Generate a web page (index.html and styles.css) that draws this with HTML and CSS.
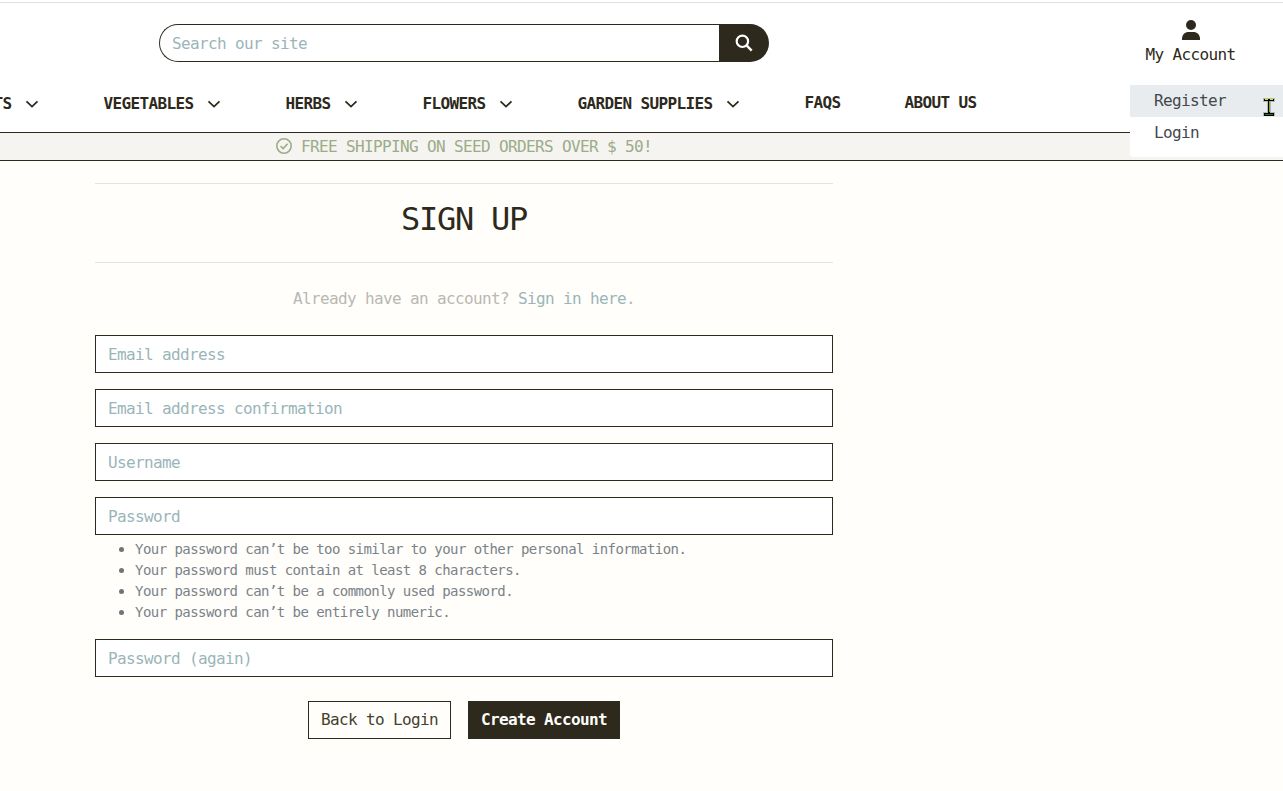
FILE: index.html
```html
<!DOCTYPE html>
<html lang="en">
<head>
<meta charset="utf-8">
<title>Sign Up</title>
<link rel="stylesheet" href="styles.css">
</head>
<body>
<header class="header">
  <div class="topbar">
    <form class="search">
      <input class="search-input" type="text" placeholder="Search our site">
      <button class="search-button" type="button" aria-label="Search">
        <svg width="18" height="18" viewBox="0 0 18 18" fill="none" stroke="#fff"><circle cx="7.4" cy="7.3" r="5.7" stroke-width="2.2"/><path d="M11.3 11.2l5.4 5.4" stroke-width="2.4"/></svg>
      </button>
    </form>
    <div class="account">
      <svg class="account-icon" width="18" height="20" viewBox="0 0 18 20" fill="#2d291c"><circle cx="9" cy="5" r="5"/><path d="M0 20v-1.2C0 14.700 3.100 12 6.500 12h5c3.400 0 6.500 2.700 6.500 6.800V20z"/></svg>
      <span>My Account</span>
      <div class="menu">
        <a class="menu-item active">Register</a>
        <a class="menu-item">Login</a>
      </div>
    </div>
  </div>
  <nav class="nav">
    <a class="nav-item">TS<svg class="chevron" viewBox="0 0 14 8"><path d="M1.500 1.300L7 6.600l5.500-5.300"/></svg></a>
    <a class="nav-item">VEGETABLES<svg class="chevron" viewBox="0 0 14 8"><path d="M1.500 1.300L7 6.600l5.500-5.300"/></svg></a>
    <a class="nav-item">HERBS<svg class="chevron" viewBox="0 0 14 8"><path d="M1.500 1.300L7 6.600l5.500-5.300"/></svg></a>
    <a class="nav-item">FLOWERS<svg class="chevron" viewBox="0 0 14 8"><path d="M1.500 1.300L7 6.600l5.500-5.300"/></svg></a>
    <a class="nav-item">GARDEN SUPPLIES<svg class="chevron" viewBox="0 0 14 8"><path d="M1.500 1.300L7 6.600l5.500-5.300"/></svg></a>
    <a class="nav-item plain">FAQS</a>
    <a class="nav-item plain">ABOUT US</a>
  </nav>
</header>
<div class="banner">
  <svg width="16" height="16" viewBox="0 0 16 16" fill="none" stroke="#9cab88" stroke-width="1.600"><circle cx="8" cy="8" r="7.200"/><path d="M4.600 8.200l2.500 2.300 4.500-4.800"/></svg>
  <span class="banner-text">FREE SHIPPING ON SEED ORDERS OVER $ 50!</span>
</div>
<main class="signup">
  <h1 class="title">SIGN UP</h1>
  <p class="hint">Already have an account? <a class="hint-link">Sign in here</a>.</p>
  <form class="form">
    <input class="field" type="text" placeholder="Email address">
    <input class="field" type="text" placeholder="Email address confirmation">
    <input class="field" type="text" placeholder="Username">
    <div>
      <input class="field" type="password" placeholder="Password">
      <ul class="rules">
        <li>Your password can’t be too similar to your other personal information.</li>
        <li>Your password must contain at least 8 characters.</li>
        <li>Your password can’t be a commonly used password.</li>
        <li>Your password can’t be entirely numeric.</li>
      </ul>
    </div>
    <input class="field" type="password" placeholder="Password (again)">
    <div class="actions">
      <a class="button">Back to Login</a>
      <button class="button primary" type="button">Create Account</button>
    </div>
  </form>
</main>
<svg class="pointer" width="12" height="18" viewBox="0 0 12 18"><path d="M0 0h12v4H8v10h4v4H0v-4h4V4H0z" fill="#b5b8ba"/><path d="M1 1h10v2H7v12h4v3H1v-3h4V3H1z" fill="#000"/><path d="M2 1.500h3m2 0h3" stroke="#d5f000"/><path d="M6.500 3v11" stroke="#97a800"/><path d="M2 16.500h8" stroke="#168000"/></svg>
</body>
</html>
```
FILE: styles.css
```css
* { box-sizing: border-box; }
body {
  margin: 0;
  height: 791px;
  overflow: hidden;
  background: #fffefa;
  color: #2d291c;
  font: 16px/24px "DejaVu Sans Mono", monospace;
  letter-spacing: -0.0395em;
}
input, button { font: inherit; letter-spacing: inherit; }
input::placeholder { color: #9ab5b9; opacity: 1; }
.header {
  height: 132px;
  padding-top: 2px;
  background: #fff;
}
.topbar {
  display: flex;
  justify-content: space-between;
  height: 83px;
  padding: 21px 47px 0 159px;
  border-top: 1px solid #dee2e6;
}
.search { display: flex; width: 610px; height: 38px; }
.search-input {
  flex: 1;
  min-width: 0;
  padding: 1px 12px 0;
  border: 1px solid #2d291c;
  border-right: 0;
  border-radius: 19px 0 0 19px;
  background: #fff;
  outline: 0;
}
.search-button {
  display: flex;
  align-items: center;
  justify-content: center;
  width: 50px;
  padding: 0;
  border: 0;
  border-radius: 0 19px 19px 0;
  background: #2d291c;
}
.account {
  position: relative;
  display: flex;
  flex-direction: column;
  align-items: center;
  width: 91px;
  margin-top: -4px;
  white-space: nowrap;
}
.account-icon { flex: none; margin-bottom: 3px; }
.menu {
  position: absolute;
  top: 65px;
  left: -15px;
  width: 153px;
  height: 72px;
  background: #fff;
  border-radius: 0 0 0 4px;
}
.menu-item {
  display: block;
  height: 32px;
  padding: 4px 24px;
  color: #43484d;
}
.active { background: #e9ecef; }
.nav {
  display: flex;
  gap: 64px;
  margin-left: -6.5px;
  padding-top: 7px;
  font-weight: 700;
  white-space: nowrap;
}
.nav-item { display: flex; align-items: center; gap: 14px; }
.plain { margin-top: -2px; }
.chevron {
  width: 14px;
  height: 8px;
  margin: 0 0.5px 1px -0.5px;
  fill: none;
  stroke: #2d291c;
  stroke-width: 1.8;
}
.banner {
  display: flex;
  align-items: center;
  justify-content: center;
  gap: 9px;
  width: 100%;
  height: 29px;
  padding: 0 355px 1px 0;
  border: solid #2d291c;
  border-width: 1px 0;
  background: #f5f4f0;
  color: #9cab88;
}
.banner-text { padding-top: 1px; }
.signup { width: 738px; margin: 22px 0 0 95px; }
.title {
  height: 80px;
  margin: 0;
  padding-top: 16px;
  border: solid #e4e3e0;
  border-width: 1px 0;
  font-size: 32px;
  font-weight: 400;
  letter-spacing: -0.0395em;
  line-height: 38px;
  text-align: center;
}
.hint { margin: 24px 0; color: #b9b8b4; text-align: center; }
.hint-link { color: #9ab5b9; }
.form { display: flex; flex-direction: column; gap: 16px; }
.field {
  display: block;
  width: 100%;
  height: 38px;
  padding: 0 12px;
  border: 1px solid #2d291c;
  border-radius: 0;
  background: #fff;
  outline: 0;
}
.rules {
  margin: 4px 0 0;
  padding-left: 40px;
  color: #7a8289;
  font-size: 14px;
  letter-spacing: -0.0395em;
  line-height: 21px;
  list-style: none;
}
.rules li { display: flex; align-items: center; }
.rules li::before {
  content: "";
  width: 5px;
  height: 5px;
  margin: 0 11px 0 -16px;
  border-radius: 50%;
  background: #6c757d;
}
.actions {
  display: flex;
  justify-content: center;
  gap: 17px;
  margin-top: 8px;
}
.button {
  height: 38px;
  padding: 6px 12px;
  border: 1px solid #2d291c;
  color: #45412f;
  line-height: 24px;
}
.primary { background: #2d291c; color: #fffefa; font-weight: 700; }
.pointer { position: absolute; left: 1263px; top: 98px; }
```
